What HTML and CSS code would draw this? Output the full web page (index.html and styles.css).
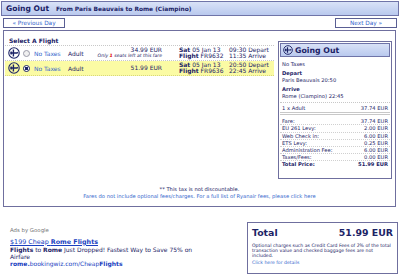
FILE: index.html
```html
<!DOCTYPE html>
<html lang="en">
<head>
  <meta charset="UTF-8">
  <title>Going Out - Select A Flight</title>
  <link rel="stylesheet" href="styles.css">
</head>
<body>
  <div class="titlebar">
    <span class="title">Going Out</span>
    <span class="route">From Paris Beauvais to Rome (Ciampino)</span>
  </div>

  <div class="daynav">
    <a class="daybtn" href="#">&laquo; Previous Day</a>
    <a class="daybtn" href="#">Next Day &raquo;</a>
  </div>

  <div class="panel">
    <div class="panel-main">
      <div class="flights">
        <div class="select-title">Select A Flight</div>

        <div class="flight">
          <svg class="plane" viewBox="0 0 12 12"><circle cx="6" cy="6" r="5.2"/><path d="M2.2 6h7.6M9.8 6l-1-0.8M5.4 2.6v6.8M3.2 4.6v2.8"/></svg>
          <span class="radio"></span>
          <span class="fare-name">No Taxes</span>
          <span class="pax">Adult</span>
          <div class="price">
            <div>34.99 EUR</div>
            <div class="seats">Only <b>1</b> seats left at this fare</div>
          </div>
          <div class="date">
            <div><b>Sat</b> 05 Jan 13</div>
            <div><b>Flight</b> FR9632</div>
          </div>
          <div class="times">
            <div>09:30 Depart</div>
            <div>11:35 Arrive</div>
          </div>
        </div>

        <div class="flight selected">
          <svg class="plane" viewBox="0 0 12 12"><circle cx="6" cy="6" r="5.2"/><path d="M2.2 6h7.6M9.8 6l-1-0.8M5.4 2.6v6.8M3.2 4.6v2.8"/></svg>
          <span class="radio checked"></span>
          <span class="fare-name">No Taxes</span>
          <span class="pax">Adult</span>
          <div class="price">
            <div>51.99 EUR</div>
          </div>
          <div class="date">
            <div><b>Sat</b> 05 Jan 13</div>
            <div><b>Flight</b> FR9636</div>
          </div>
          <div class="times">
            <div>20:50 Depart</div>
            <div>22:45 Arrive</div>
          </div>
        </div>
      </div>

      <div class="summary">
        <div class="summary-head">
          <svg class="plane" viewBox="0 0 12 12"><circle cx="6" cy="6" r="5.2"/><path d="M2.2 6h7.6M9.8 6l-1-0.8M5.4 2.6v6.8M3.2 4.6v2.8"/></svg>
          <span>Going Out</span>
        </div>
        <div class="summary-info">
          <div>No Taxes</div>
          <div class="label">Depart</div>
          <div>Paris Beauvais 20:50</div>
          <div class="label">Arrive</div>
          <div>Rome (Ciampino) 22:45</div>
        </div>
        <div class="line pax-line"><span>1 x Adult</span><span>37.74 EUR</span></div>
        <div class="fees">
          <div class="line"><span>Fare:</span><span>37.74 EUR</span></div>
          <div class="line"><span>EU 261 Levy:</span><span>2.00 EUR</span></div>
          <div class="line"><span>Web Check in:</span><span>6.00 EUR</span></div>
          <div class="line"><span>ETS Levy:</span><span>0.25 EUR</span></div>
          <div class="line"><span>Administration Fee:</span><span>6.00 EUR</span></div>
          <div class="line"><span>Taxes/Fees:</span><span>0.00 EUR</span></div>
          <div class="line total-line"><span>Total Price:</span><span>51.99 EUR</span></div>
        </div>
      </div>
    </div>

    <div class="notes">
      <div>** This tax is not discountable.</div>
      <a href="#">Fares do not include optional fees/charges. For a full list of Ryanair fees, please click here</a>
    </div>
  </div>

  <div class="bottom">
    <div class="ads">
      <div class="ads-by">Ads by Google</div>
      <a class="ad-title" href="#">$199 Cheap <b>Rome Flights</b></a>
      <div class="ad-text"><b>Flights</b> to <b>Rome</b> Just Dropped! Fastest Way to Save 75% on<br>Airfare</div>
      <div class="ad-url"><b>rome.</b>bookingwiz.com/Cheap<b>Flights</b></div>
    </div>

    <div class="total-box">
      <div class="total-row"><span>Total</span><span>51.99 EUR</span></div>
      <p>Optional charges such as Credit Card Fees of 2% of the total transaction value and checked baggage fees are not included.</p>
      <a href="#">Click here for details</a>
    </div>
  </div>
</body>
</html>
```

FILE: styles.css
```css
body {
  margin: 0;
  padding: 1px;
  font-family: "DejaVu Sans", Verdana, sans-serif;
  font-size: 6px;
  color: #1c2366;
  background-color: #ffffff;
}

a {
  color: #3366cc;
  text-decoration: none;
}

.titlebar {
  display: flex;
  align-items: baseline;
  gap: 7px;
  height: 13px;
  padding: 0 4px;
  border: 1px solid #6f74a8;
  background: linear-gradient(#d9e2f7, #b9c9ee);
}

.title {
  font-size: 7.6px;
  font-weight: bold;
  line-height: 13px;
}

.route {
  font-size: 5.9px;
  font-weight: bold;
}

.daynav {
  display: flex;
  justify-content: space-between;
  padding: 2px 2px 0 2px;
}

.daybtn {
  display: block;
  width: 60px;
  height: 8px;
  line-height: 8px;
  border: 1px solid #5a5f94;
  text-align: center;
  font-size: 5.8px;
}

.panel {
  margin: 2px 0 0 2px;
  width: 391px;
  border: 1px solid #6f6f9e;
  padding-bottom: 5px;
}

.panel-main {
  display: flex;
  justify-content: space-between;
  padding: 4px 3px 0 1px;
}

.flights {
  width: 269px;
}

.select-title {
  font-weight: bold;
  padding: 2px 0 1px 4px;
  border-bottom: 1px dotted #c8c8c8;
}

.flight {
  display: flex;
  align-items: center;
  height: 14px;
  padding-left: 3px;
  border-bottom: 1px dotted #c8c8c8;
}

.flight.selected {
  background-color: #fbfba4;
  border-bottom-color: #d8d87a;
}

.plane {
  width: 12px;
  height: 12px;
  margin-right: 3px;
  fill: none;
  stroke: #1c2366;
  stroke-width: 1.1;
}

.plane path {
  stroke-width: 1.4;
}

.radio {
  width: 5px;
  height: 5px;
  border: 1px solid #9a9aa8;
  border-radius: 50%;
  background-color: #f0f0f0;
  margin-right: 4px;
}

.radio.checked {
  border-color: #1c2366;
  background: radial-gradient(#1c2366 40%, #ffffff 48%);
}

.fare-name {
  width: 34px;
  color: #3366cc;
}

.pax {
  width: 20px;
}

.price {
  width: 74px;
  text-align: right;
  line-height: 6.5px;
}

.seats {
  font-style: italic;
  font-size: 4.6px;
}

.seats b {
  color: #dd0000;
}

.date {
  width: 50px;
  margin-left: 17px;
  line-height: 6.5px;
}

.times {
  line-height: 6.5px;
}

.summary {
  width: 110px;
  border: 1px solid #6f6f9e;
  margin-top: 6px;
  padding: 1px 1px 10px 1px;
  font-size: 5.2px;
  align-self: flex-start;
}

.summary-head {
  display: flex;
  align-items: center;
  gap: 2px;
  height: 12px;
  padding-left: 2px;
  border: 1px solid #6f74a8;
  background: linear-gradient(#d9e2f7, #b9c9ee);
  font-size: 7.8px;
  font-weight: bold;
}

.summary-head .plane {
  width: 10px;
  height: 10px;
  margin-right: 0;
}

.summary-info {
  padding: 4px 2px 3px 2px;
  line-height: 6.4px;
  border-bottom: 1px dotted #c8c8c8;
}

.summary-info .label {
  font-weight: bold;
  margin-top: 3px;
}

.line {
  display: flex;
  justify-content: space-between;
  padding: 0 2px;
  line-height: 6.2px;
  border-bottom: 1px dotted #d0d0d0;
}

.pax-line {
  padding-top: 2px;
  padding-bottom: 1px;
  border-bottom: 3px double #c8c8c8;
}

.fees {
  padding-top: 3px;
}

.total-line {
  font-weight: bold;
  border-bottom: none;
}

.notes {
  margin-top: 7px;
  text-align: center;
  font-size: 5.2px;
  line-height: 7.5px;
}

.bottom {
  display: flex;
  justify-content: space-between;
  padding: 15px 1px 0 9px;
}

.ads {
  width: 200px;
  margin-top: 5px;
  font-size: 6px;
  line-height: 7px;
}

.ads-by {
  color: #777777;
  font-size: 5.4px;
  margin-bottom: 4px;
}

.ad-title {
  display: block;
  font-size: 6.4px;
  line-height: 8.5px;
  text-decoration: underline;
  color: #1a3fbf;
}

.ad-url {
  color: #1a3fbf;
}

.total-box {
  width: 141px;
  height: 46px;
  border: 1px solid #6f6f9e;
  padding: 2px 4px;
  font-size: 4.6px;
  line-height: 5px;
}

.total-row {
  display: flex;
  justify-content: space-between;
  font-size: 9.4px;
  font-weight: bold;
  line-height: 16px;
  margin-bottom: 2px;
}

.total-box p {
  margin: 0 0 2px 0;
}
```
